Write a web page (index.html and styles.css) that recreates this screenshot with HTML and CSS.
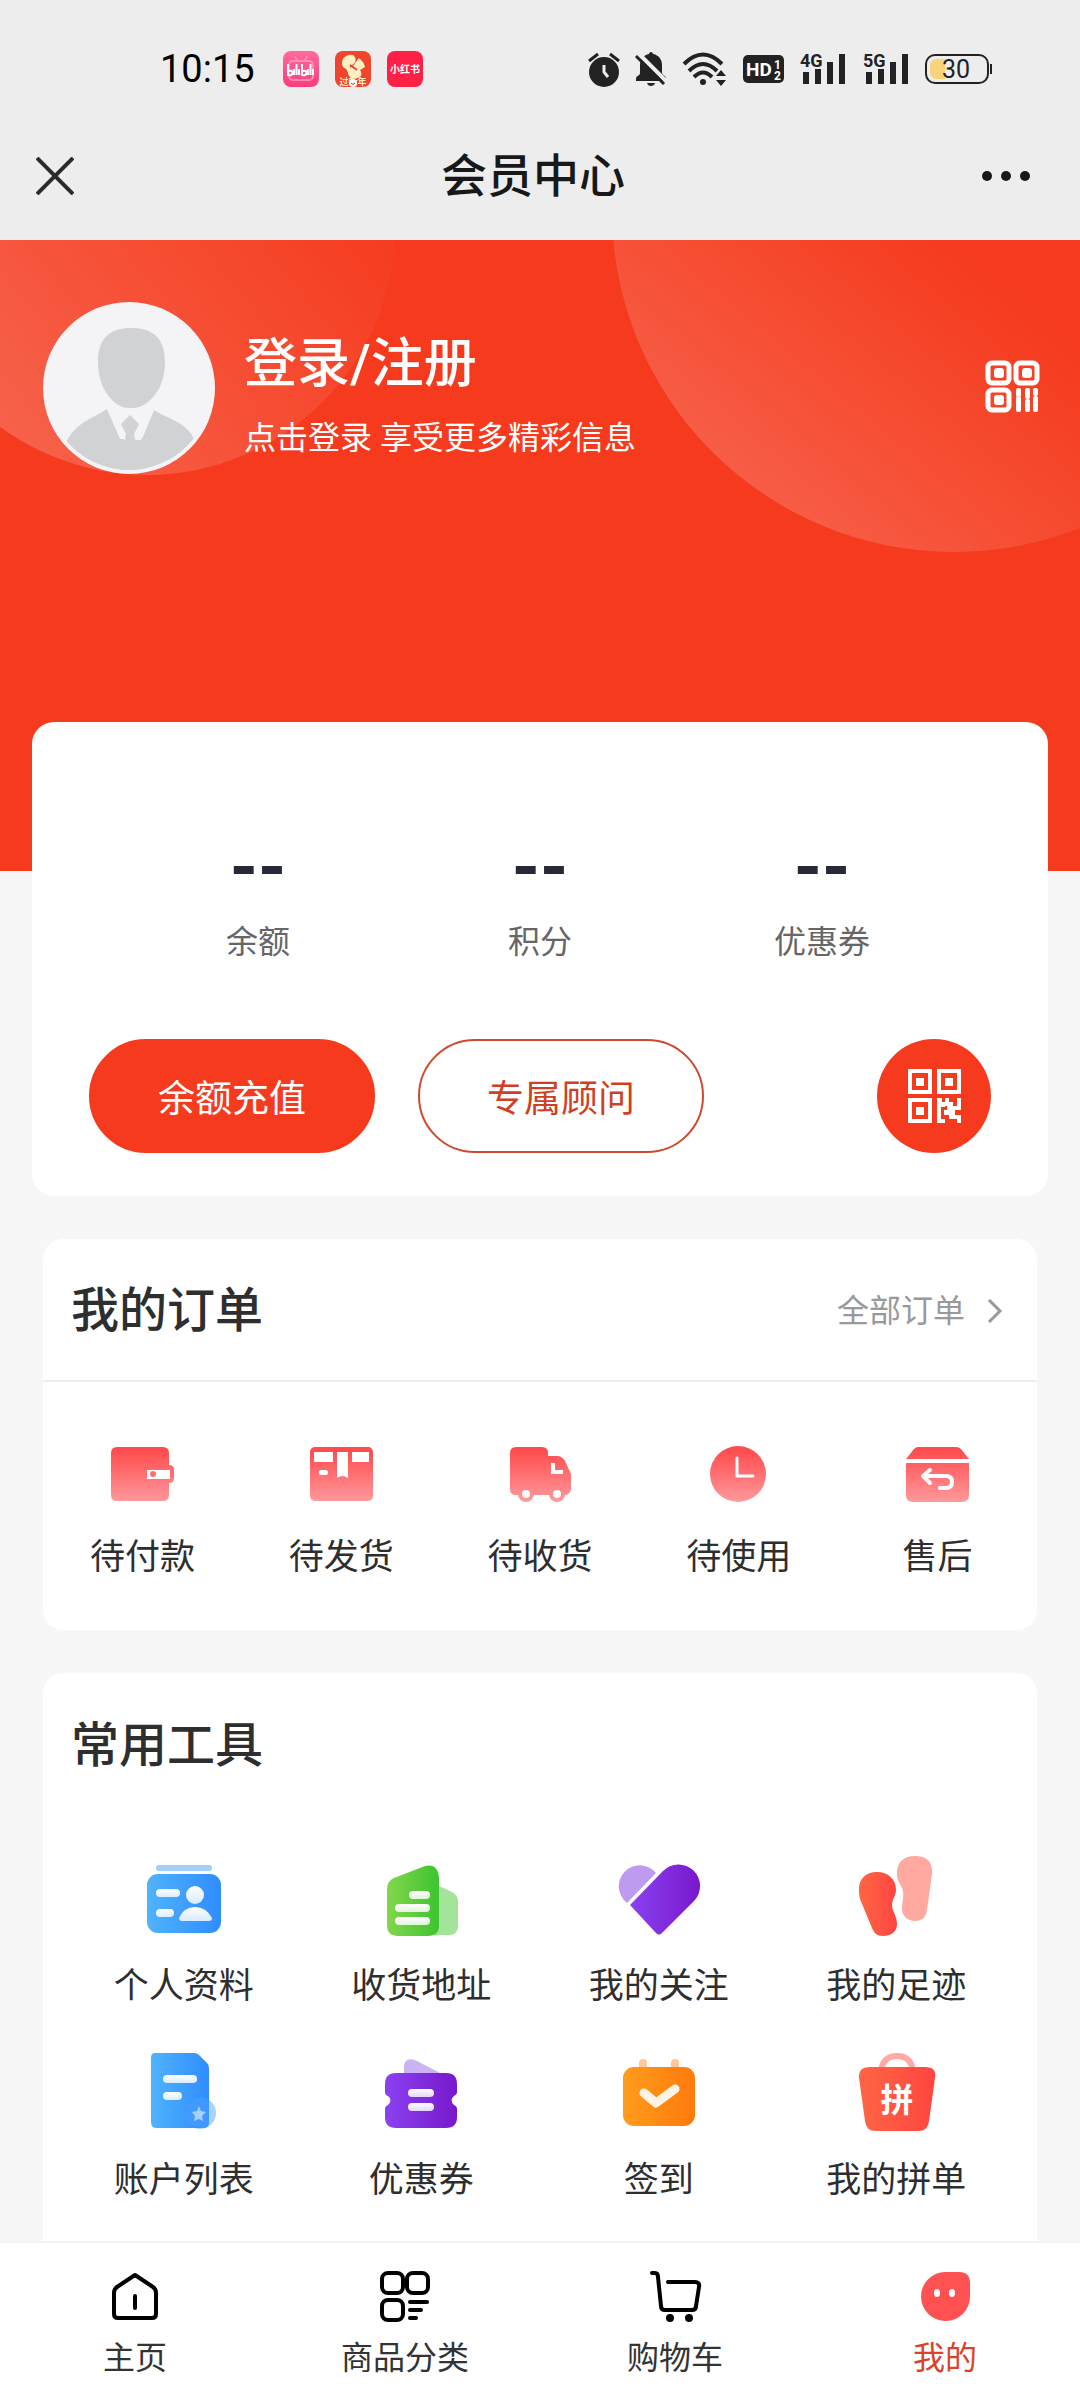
FILE: index.html
```
<!DOCTYPE html>
<html lang="zh-CN">
<head>
  <meta charset="UTF-8">
  <meta name="viewport" content="width=device-width, initial-scale=1">
  <title>会员中心</title>
  <link rel="stylesheet" href="styles.css">
</head>
<body>
  <div class="status-bar">
    <span class="time">10:15</span>
    <div class="apps">
      <svg width="36" height="36" viewBox="0 0 36 36">
        <defs>
          <linearGradient id="pink" x1="0" y1="0" x2="0" y2="1">
            <stop offset="0" stop-color="#ff6a9c"/><stop offset="1" stop-color="#fb3c7e"/>
          </linearGradient>
        </defs>
        <rect width="36" height="36" rx="8" fill="url(#pink)"/>
        <g fill="none" stroke="#ff8db2" stroke-width="2" stroke-linecap="round">
          <rect x="6" y="10" width="24" height="19" rx="4"/>
          <path d="M12 6l3 4M24 6l-3 4"/>
        </g>
        <path d="M5 13v11q4 1 4.500-2t-4.500-2M11 18v6M13.500 13v11M16 18v6M19 13v11q4 1 4.500-2t-4.500-2M25 18v6M27.500 13v11M30 18v6" fill="none" stroke="#fff" stroke-width="2"/>
      </svg>
      <svg width="36" height="36" viewBox="0 0 36 36">
        <rect width="36" height="36" rx="8" fill="#f1442c"/>
        <path d="M9 17C5 13 7 5 14 4c5-1 8 3 6 7-1 2-3 3-5 4 0 2 0 4-1 7-3-2-1-4-5-5z" fill="#fff0c4"/>
        <path d="M19 14c1-3 3-4 5-7 2 2 5 4 6 9l-5 3c3 4 1 8-3 8h-5c-5-2-5-7-2-10z" fill="#fff0c4"/>
        <path d="M15 14l7 5" stroke="#f1442c" stroke-width="2"/>
        <text class="app-text" x="18" y="34" font-size="9" fill="#fff0c4">过新年</text>
        <circle cx="18" cy="32" r="4" fill="#fff"/>
        <path d="M16 32q2 3 4 0" fill="none" stroke="#d23" stroke-width="1"/>
      </svg>
      <svg width="36" height="36" viewBox="0 0 36 36">
        <rect width="36" height="36" rx="8" fill="#ff2145"/>
        <text class="app-text" x="18" y="22" font-size="10" fill="#fff">小红书</text>
      </svg>
    </div>
    <div class="signals">
      <!-- alarm, muted bell, wifi -->
      <svg width="32" height="36" viewBox="0 0 32 36" fill="#222">
        <circle cx="16" cy="21" r="15"/>
        <path d="M1 10l9-7M31 10l-9-7" stroke="#222" stroke-width="3"/>
        <path d="M16 14v7l4 5" fill="none" stroke="#ededed" stroke-width="3"/>
      </svg>
      <svg width="32" height="36" viewBox="0 0 32 36">
        <path d="M16 1c1 0 2 1 2 2 6 1 9 6 9 11v8c1 3 4 2 4 6v2H1v-2c0-4 4-3 4-6v-8C5 8 9 4 14 3c0-1 1-2 2-2z" fill="#222"/>
        <path d="M12 32h8q-1 3-4 3t-4-3z" fill="#222"/>
        <path d="M4 3l28 28" stroke="#ededed" stroke-width="4"/>
        <path d="M1 5l28 28" stroke="#222" stroke-width="3"/>
      </svg>
      <svg width="46" height="36" viewBox="0 0 46 36">
        <g fill="none" stroke="#222" stroke-width="4">
          <path d="M2 13Q21-6 40 13"/>
          <path d="M7 20q14-14 28 0"/>
          <path d="M12 26q9-9 18 0"/>
        </g>
        <circle cx="21" cy="31" r="3" fill="#222"/>
        <path d="M34 25l5-6 5 6zM34 29l5 6 5-6z" fill="#222"/>
      </svg>
      <svg width="41" height="36" viewBox="0 0 41 36">
        <rect y="4" width="41" height="28" rx="5" fill="#222"/>
        <text x="3" y="25" font-size="19" fill="#fff">HD</text>
        <text x="31" y="18" font-size="12" fill="#fff">1</text>
        <text x="31" y="29" font-size="12" fill="#fff">2</text>
      </svg>
      <svg width="48" height="36" viewBox="0 0 48 36" fill="#222">
        <path d="M4 21h6v12H4zM16 18h6v15h-6zM28 11h6v22h-6zM40 3h6v30h-6z"/>
        <text x="1" y="16" font-size="18">4G</text>
      </svg>
      <svg width="48" height="36" viewBox="0 0 48 36" fill="#222">
        <path d="M4 21h6v12H4zM16 18h6v15h-6zM28 11h6v22h-6zM40 3h6v30h-6z"/>
        <text x="1" y="16" font-size="18">5G</text>
      </svg>
      <svg width="68" height="36" viewBox="0 0 68 36">
        <rect x="1" y="4" width="62" height="28" rx="9" fill="none" stroke="#222" stroke-width="2"/>
        <path d="M20 8H12q-7 0-7 7v6q0 7 7 7h8z" fill="#f9d27c"/>
        <path d="M66 13v10" stroke="#222" stroke-width="2"/>
        <text class="charge" x="31" y="27" font-size="25" fill="#222">30</text>
      </svg>
    </div>
  </div>

  <header class="nav-bar">
    <button class="nav-btn" aria-label="关闭">
      <svg width="38" height="38" viewBox="0 0 38 38" stroke="#2b2b2b" stroke-width="4"><path d="M1 1l36 36M37 1L1 37"/></svg>
    </button>
    <h1>会员中心</h1>
    <button class="nav-btn more" aria-label="更多">
      <svg width="48" height="12" viewBox="0 0 48 12" fill="#181818"><circle cx="5" cy="6" r="5"/><circle cx="24" cy="6" r="5"/><circle cx="43" cy="6" r="5"/></svg>
    </button>
  </header>

  <main>
    <section class="hero">
      <a class="profile" href="#login">
        <svg class="avatar" viewBox="0 0 173 173">
          <defs><clipPath id="face"><circle cx="86" cy="86" r="82"/></clipPath></defs>
          <circle cx="86" cy="86" r="86" fill="#f4f4f6"/>
          <g clip-path="url(#face)" fill="#d0d2d4">
            <path d="M88 26c22 0 34 10 34 34 0 20-8 33-17 40-6 5-11 6-17 6s-11-1-17-6c-8-7-16-20-16-40 0-24 12-34 33-34z"/>
            <path d="M64 107c-12 9-32 12-42 36v30h130v-34c-8-20-28-22-41-31l-12 29h-22z"/>
            <path d="M64 107l17 31h17l13-30-24-2z" fill="#f4f4f6"/>
            <path d="M87 113l9 9-5 10 5 24H78l5-24-5-10z"/>
          </g>
        </svg>
        <span class="profile-text">
          <strong>登录/注册</strong>
          <span>点击登录 享受更多精彩信息</span>
        </span>
      </a>
      <button class="scan" aria-label="会员码">
        <svg width="56" height="54" viewBox="0 0 56 54" fill="none" stroke="#fff" stroke-width="5">
          <rect x="3" y="3" width="21" height="20" rx="4"/>
          <rect x="31" y="3" width="21" height="20" rx="4"/>
          <rect x="3" y="30" width="21" height="20" rx="4"/>
          <g fill="#fff" stroke="none">
            <rect x="9" y="8" width="10" height="10" rx="3"/>
            <rect x="37" y="8" width="10" height="10" rx="3"/>
            <rect x="9" y="35" width="10" height="10" rx="3"/>
            <rect x="31" y="28" width="5" height="9" rx="2"/><rect x="31" y="36" width="5" height="16" rx="2"/>
            <rect x="40" y="28" width="5" height="11" rx="2"/><rect x="40" y="39" width="5" height="13" rx="2"/>
            <rect x="48" y="28" width="5" height="8" rx="2"/><rect x="48" y="36" width="5" height="16" rx="2"/>
          </g>
        </svg>
      </button>
    </section>

    <section class="account">
      <dl class="stats">
        <div><dt>余额</dt><dd>--</dd></div>
        <div><dt>积分</dt><dd>--</dd></div>
        <div><dt>优惠券</dt><dd>--</dd></div>
      </dl>
      <div class="actions">
        <button class="pill filled">余额充值</button>
        <button class="pill">专属顾问</button>
        <button class="qr" aria-label="二维码">
          <svg width="53" height="54" viewBox="0 0 53 54" fill="#fff">
            <path fill-rule="evenodd" d="M0 0h24v25H0zM4 4v17h16V4zM29 0h24v25H29zM33 4v17h16V4zM0 29h24v25H0zM4 33v17h16V33z"/>
            <path d="M8 9h8v8H8zM37 9h8v8h-8zM8 38h8v8H8z"/>
            <path d="M29 29h5v4h3v5h-4v12h4v4h-8zM37 29h4v4h-4zM41 33h4v4h4v-8h4v12h-6v5h6v8h-4v-4h-8v-4h-5v-5h3v-4h-2v-4h4z"/>
          </svg>
        </button>
      </div>
    </section>

    <section class="card">
      <div class="card-head">
        <h2>我的订单</h2>
        <a class="all" href="#orders">全部订单
          <svg width="16" height="26" viewBox="0 0 16 26" fill="none" stroke="#999" stroke-width="3"><path d="M2 2l11 11L2 24"/></svg>
        </a>
      </div>
      <nav class="orders">
        <a href="#pay">
          <svg width="64" height="56" viewBox="0 0 64 56">
            <defs>
              <linearGradient id="red" gradientUnits="userSpaceOnUse" x1="0" y1="4" x2="0" y2="56">
                <stop offset="0" stop-color="#ff4c4f"/><stop offset="1" stop-color="#ff9a9c"/>
              </linearGradient>
            </defs>
            <path d="M7 1h46q6 0 6 6v12q5 0 5 5v8q0 5-5 5v12q0 6-6 6H7q-6 0-6-6V7q0-6 6-6z" fill="url(#red)"/>
            <path d="M37 24h23v9H37z" fill="#fff"/>
            <circle cx="43" cy="28" r="3" fill="#ff6f71"/>
          </svg>
          待付款
        </a>
        <a href="#ship">
          <svg width="64" height="56" viewBox="0 0 64 56">
            <rect x="1" y="1" width="63" height="54" rx="5" fill="url(#red)"/>
            <path d="M5 6h19v10H5zM28 6h11v26q-6-4-11 0zM43 6h17v10H43z" fill="#fff"/>
            <rect x="10" y="24" width="9" height="5" rx="2" fill="#fff"/>
          </svg>
          待发货
        </a>
        <a href="#receive">
          <svg width="64" height="56" viewBox="0 0 64 56">
            <path d="M8 1h26q6 0 6 6v3h9q5 0 8 5l6 13v15q0 4-5 6H8q-6 0-6-6V7q0-6 6-6z" fill="url(#red)"/>
            <circle cx="18" cy="48" r="8" fill="url(#red)"/><circle cx="49" cy="48" r="8" fill="url(#red)"/>
            <circle cx="18" cy="48" r="4" fill="#fff"/><circle cx="49" cy="48" r="4" fill="#fff"/>
            <path d="M45 17v9h10" fill="none" stroke="#fff" stroke-width="4"/>
          </svg>
          待收货
        </a>
        <a href="#use">
          <svg width="64" height="56" viewBox="0 0 64 56">
            <circle cx="31" cy="28" r="28" fill="url(#red)"/>
            <path d="M30 12v18h16" fill="none" stroke="#fff" stroke-width="3" stroke-linecap="round" stroke-linejoin="round"/>
          </svg>
          待使用
        </a>
        <a href="#service">
          <svg width="64" height="56" viewBox="0 0 64 56">
            <path d="M0 13L8 3q2-2 4-2h38q3 0 5 2l8 10zM0 17h63v32q0 7-7 7H7q-7 0-7-7z" fill="url(#red)"/>
            <path d="M24 24l-7 6 7 7M18 30h22q6 0 6 6t-6 6h-6" fill="none" stroke="#fff" stroke-width="4" stroke-linecap="round" stroke-linejoin="round"/>
          </svg>
          售后
        </a>
      </nav>
    </section>

    <section class="card tools-card">
      <h2>常用工具</h2>
      <nav class="tools">
        <a href="#info">
          <svg width="88" height="88" viewBox="0 0 88 88">
            <defs>
              <linearGradient id="blue"><stop offset="0" stop-color="#50b3fd"/><stop offset="1" stop-color="#2f8dfd"/></linearGradient>
              <linearGradient id="green"><stop offset="0" stop-color="#83d64b"/><stop offset="1" stop-color="#3dc431"/></linearGradient>
              <linearGradient id="purple"><stop offset="0" stop-color="#8a42f0"/><stop offset="1" stop-color="#7818cc"/></linearGradient>
              <linearGradient id="coral"><stop offset="0" stop-color="#ff6544"/><stop offset="1" stop-color="#fe4541"/></linearGradient>
              <linearGradient id="orange"><stop offset="0" stop-color="#ff9c1c"/><stop offset="1" stop-color="#fe7a0c"/></linearGradient>
              <linearGradient id="shine" x1="0" y1="0" x2="0" y2="1"><stop offset="0" stop-color="#fff"/><stop offset="1" stop-color="#fff" stop-opacity=".8"/></linearGradient>
            </defs>
            <rect x="16" y="14" width="56" height="6" rx="3" fill="#a3d0fa"/>
            <rect x="7" y="23" width="74" height="59" rx="11" fill="url(#blue)"/>
            <g fill="url(#shine)">
              <rect x="16" y="38" width="24" height="8" rx="4"/>
              <rect x="16" y="58" width="18" height="8" rx="4"/>
              <circle cx="55" cy="44" r="9"/>
              <path d="M39 67q5-11 16-11t17 11q0 3-3 3H42q-3 0-3-3z"/>
            </g>
          </svg>
          个人资料
        </a>
        <a href="#address">
          <svg width="88" height="88" viewBox="0 0 88 88">
            <path d="M58 33l17 8q6 3 6 10v24q0 9-9 9H50z" fill="#a3e49b"/>
            <path d="M17 27l31-12q13-3 14 12v47q0 11-11 11H21q-11 0-11-11V38q0-8 7-11z" fill="url(#green)"/>
            <g fill="url(#shine)">
              <rect x="32" y="40" width="21" height="8" rx="4"/>
              <rect x="18" y="53" width="35" height="8" rx="4"/>
              <rect x="18" y="66" width="35" height="8" rx="4"/>
            </g>
          </svg>
          收货地址
        </a>
        <a href="#follow">
          <svg width="88" height="88" viewBox="0 0 88 88">
            <path d="M41 22A21 21 0 1 0 12 52z" fill="#bd9bee"/>
            <path d="M15 54L48 20A21.500 21.500 0 1 1 79 50L47 82q-3 3-6 0z" fill="url(#purple)"/>
          </svg>
          我的关注
        </a>
        <a href="#history">
          <svg width="88" height="88" viewBox="0 0 88 88">
            <path d="M45 24C44 12 51 5 63 5c12 0 18 6 17 18l-5 36c-1 7-5 11-12 11s-13-5-13-12c0-8 2-11 1-18-1-6-6-9-6-16z" fill="#ffa9a0"/>
            <path d="M7 40C6 28 14 21 25 21s19 7 19 18c0 6-4 9-4 15s5 11 5 19-6 12-14 12c-6 0-9-3-11-8L8 48q-1-4-1-8z" fill="url(#coral)"/>
          </svg>
          我的足迹
        </a>
        <a href="#accounts">
          <svg width="88" height="88" viewBox="0 0 88 88">
            <circle cx="60" cy="68" r="16" fill="#a9d3fc"/>
            <path d="M15 8h39q3 0 5 2l8 8q2 2 2 5v54q0 6-6 6H17q-6 0-6-6V13q0-5 4-5z" fill="url(#blue)"/>
            <path d="M69 55v23q0 5-6 5-12-1-18-10 0-15 15-21 5 0 9 3z" fill="#4a9ffd" opacity=".6"/>
            <path d="M59 61l2 5 5 1-4 4 1 5-4-2-5 2 1-5-3-4 5-1z" fill="#a5d0ff"/>
            <g fill="url(#shine)">
              <rect x="23" y="30" width="34" height="8" rx="4"/>
              <rect x="23" y="47" width="19" height="8" rx="4"/>
            </g>
          </svg>
          账户列表
        </a>
        <a href="#coupons">
          <svg width="88" height="88" viewBox="0 0 88 88">
            <path d="M27 30v-9q1-9 11-6l27 14z" fill="#cbb2f5"/>
            <path d="M19 28h50q11 0 11 11v9q-1 2-3 3-5 4 0 9 3 1 3 4v8q0 11-11 11H19Q8 83 8 72v-8q0-3 3-4 5-5 0-9-3-1-3-4v-8q0-11 11-11z" fill="url(#purple)"/>
            <g fill="url(#shine)">
              <rect x="31" y="44" width="26" height="8" rx="4"/>
              <rect x="31" y="58" width="26" height="8" rx="4"/>
            </g>
          </svg>
          优惠券
        </a>
        <a href="#checkin">
          <svg width="88" height="88" viewBox="0 0 88 88">
            <path d="M28 18v8M60 18v8" stroke="#ffc79a" stroke-width="8" stroke-linecap="round"/>
            <rect x="8" y="22" width="72" height="59" rx="11" fill="url(#orange)"/>
            <path d="M29 48l12 10 19-14" fill="none" stroke="#fff3e6" stroke-width="9" stroke-linecap="round" stroke-linejoin="round"/>
          </svg>
          签到
        </a>
        <a href="#groups">
          <svg width="88" height="88" viewBox="0 0 88 88">
            <path d="M29 26q2-15 16-15t16 15" fill="none" stroke="#ffaaa5" stroke-width="6"/>
            <path d="M18 22h55q12 0 10 11l-6 43q-1 10-11 10H24q-10 0-11-10L7 33Q6 22 18 22z" fill="url(#coral)"/>
            <text class="bag-text" x="45" y="67" font-size="33" fill="#fff">拼</text>
          </svg>
          我的拼单
        </a>
      </nav>
    </section>
  </main>

  <nav class="tab-bar">
    <a href="#home">
      <svg width="56" height="56" viewBox="0 0 56 56" fill="none" stroke="#000" stroke-width="4" stroke-linecap="round" stroke-linejoin="round">
        <path d="M28 7l18 12q3 2 3 6v21q0 4-4 4H11q-4 0-4-4V25q0-4 3-6zM28 28v12"/>
      </svg>
      主页
    </a>
    <a href="#category">
      <svg width="56" height="56" viewBox="0 0 56 56" fill="none" stroke="#000" stroke-width="4" stroke-linecap="round">
        <rect x="5" y="5" width="21" height="20" rx="6"/>
        <rect x="30" y="5" width="21" height="20" rx="6"/>
        <rect x="5" y="32" width="21" height="20" rx="6"/>
        <path d="M33 34h17M33 42h11M33 50h6"/>
      </svg>
      商品分类
    </a>
    <a href="#cart">
      <svg width="56" height="56" viewBox="0 0 56 56" fill="none" stroke="#000" stroke-width="4" stroke-linecap="round" stroke-linejoin="round">
        <path d="M5 5h3q3 0 3 4l3 29q0 4 4 4h27q4 0 4-4l3-19q1-5-4-5H21"/>
        <circle cx="23" cy="50" r="2"/><circle cx="42" cy="50" r="2"/>
      </svg>
      购物车
    </a>
    <a class="active" href="#mine">
      <svg width="56" height="56" viewBox="0 0 56 56">
        <path d="M28 4h14q11 0 11 11v13A24.500 24.500 0 1 1 28 4z" fill="#ff5052"/>
        <ellipse cx="20" cy="25" rx="3" ry="4" fill="#fff"/><ellipse cx="35" cy="25" rx="3" ry="4" fill="#fff"/>
      </svg>
      我的
    </a>
  </nav>
</body>
</html>
```
FILE: styles.css
```
* {
  box-sizing: border-box;
}
body {
  margin: 0;
  min-height: 100vh;
  display: flex;
  flex-direction: column;
  background-color: #f7f7f7;
  color: #2e2e2e;
  font-family: Roboto, "Noto Sans CJK SC", sans-serif;
}
h1, h2, dl, dd {
  margin: 0;
}
h1, h2 {
  font-weight: 500;
}
a {
  color: inherit;
  text-decoration: none;
}
button {
  padding: 0;
  border: none;
  background: none;
  font-family: inherit;
  cursor: pointer;
}
svg {
  display: block;
  flex-shrink: 0;
}

/* Phone status bar */
.status-bar {
  display: flex;
  align-items: center;
  height: 112px;
  padding: 26px 87px 0 160px;
  background-color: #ededed;
}
.time {
  font-size: 38px;
  color: #000;
}
.apps {
  display: flex;
  gap: 16px;
  margin-left: 28px;
}
.app-text {
  font-family: "Noto Sans CJK SC", sans-serif;
  font-weight: bold;
  text-anchor: middle;
}
.signals {
  display: flex;
  gap: 15px;
  margin-left: auto;
  font-weight: bold;
}
.signals svg {
  overflow: visible;
}
.charge {
  font-weight: normal;
  text-anchor: middle;
}

.nav-bar {
  display: grid;
  grid-template-columns: 1fr auto 1fr;
  align-items: center;
  height: 128px;
  padding: 0 50px 0 36px;
  background-color: #ededed;
}
.nav-bar h1 {
  font-size: 46px;
  line-height: 60px;
  color: #181818;
}
.nav-btn {
  justify-self: start;
}
.nav-btn.more {
  justify-self: end;
}

main {
  flex: 1;
  display: flex;
  flex-direction: column;
}

/* Red header with two soft circles */
.hero {
  position: relative;
  overflow: hidden;
  display: flex;
  justify-content: space-between;
  align-items: center;
  padding: 62px 39px 396px 43px;
  background-color: #f53a1d;
  color: #fff;
}
.hero::before,
.hero::after {
  content: "";
  position: absolute;
  border-radius: 50%;
}
.hero::before {
  width: 496px;
  height: 496px;
  left: -101px;
  top: -261px;
  background: linear-gradient(50deg, rgba(255, 255, 255, 0.2) 15%, rgba(255, 255, 255, 0) 80%);
}
.hero::after {
  width: 684px;
  height: 684px;
  right: -216px;
  top: -372px;
  background: linear-gradient(40deg, rgba(255, 255, 255, 0.2) 10%, rgba(255, 255, 255, 0) 48%);
}
.profile {
  position: relative;
  z-index: 1;
  display: flex;
  align-items: center;
  gap: 28px;
}
.avatar {
  width: 173px;
  height: 173px;
}
.profile-text {
  display: flex;
  flex-direction: column;
  gap: 14px;
  padding-top: 12px;
  font-size: 32px;
  line-height: 48px;
}
.profile-text strong {
  font-size: 53px;
  line-height: 72px;
  font-weight: 500;
}
.scan {
  position: relative;
  z-index: 1;
  padding-bottom: 4px;
}

/* Balance card, pulled up over the header */
.account {
  position: relative;
  margin: -149px 32px 0;
  padding: 114px 57px 43px;
  border-radius: 22px;
  background-color: #fff;
}
.stats {
  display: flex;
  padding: 0 28px;
}
.stats div {
  flex: 1;
  display: flex;
  flex-direction: column-reverse;
  align-items: center;
  gap: 18px;
}
.stats dt {
  font-size: 32px;
  line-height: 48px;
  color: #666;
}
.stats dd {
  font-size: 72px;
  line-height: 64px;
  font-weight: bold;
  color: #262a38;
}
.actions {
  display: flex;
  gap: 43px;
  margin-top: 73px;
}
.pill {
  width: 286px;
  height: 114px;
  border: 2px solid #d0492f;
  border-radius: 57px;
  font-size: 37px;
  color: #cf3f24;
}
.pill.filled {
  border-color: #f53a1d;
  background-color: #f53a1d;
  color: #fff;
}
.qr {
  display: flex;
  align-items: center;
  justify-content: center;
  width: 114px;
  height: 114px;
  margin-left: auto;
  border-radius: 50%;
  background-color: #f53a1d;
}

/* White cards */
.card {
  margin: 43px 43px 0;
  border-radius: 20px;
  background-color: #fff;
}
.card h2 {
  font-size: 48px;
  line-height: 60px;
}
.card-head {
  display: flex;
  justify-content: space-between;
  align-items: center;
  height: 143px;
  padding: 2px 34px 0 28px;
  border-bottom: 2px solid #ededed;
}
.all {
  display: flex;
  align-items: center;
  gap: 22px;
  font-size: 32px;
  line-height: 48px;
  color: #999;
}
.orders {
  display: grid;
  grid-template-columns: repeat(5, 1fr);
  padding: 64px 0 48px;
}
.orders a {
  gap: 32px;
}
.orders a,
.tools a {
  display: flex;
  flex-direction: column;
  align-items: center;
  font-size: 35px;
  line-height: 48px;
}
.tools-card {
  flex: 1;
  padding: 43px 22px 20px;
  border-radius: 20px 20px 0 0;
}
.tools-card h2 {
  padding-left: 6px;
}
.tools {
  display: grid;
  grid-template-columns: repeat(4, 1fr);
  row-gap: 34px;
  margin-top: 75px;
}
.tools a {
  gap: 24px;
}
.bag-text {
  font-family: "Noto Sans CJK SC", sans-serif;
  font-weight: bold;
  text-anchor: middle;
}

.tab-bar {
  position: sticky;
  bottom: 0;
  display: grid;
  grid-template-columns: repeat(4, 1fr);
  padding: 25px 0 22px;
  border-top: 2px solid #f3f3f3;
  background-color: #fff;
}
.tab-bar a {
  display: flex;
  flex-direction: column;
  align-items: center;
  gap: 14px;
  font-size: 32px;
  line-height: 40px;
  color: #333;
}
.tab-bar .active {
  color: #d8432a;
}
```
